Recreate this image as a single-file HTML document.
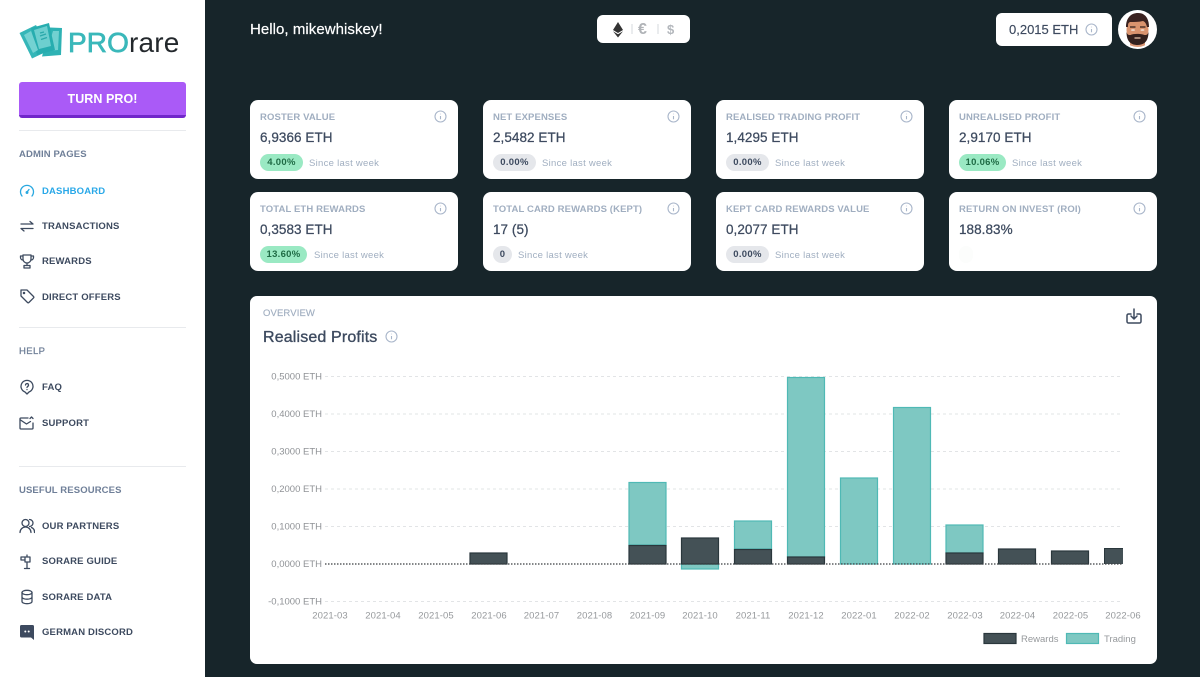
<!DOCTYPE html>
<html lang="en"><head><meta charset="utf-8"><title>PROrare</title>
<style>
*{box-sizing:border-box}
html,body{margin:0;padding:0}
body{width:1200px;height:677px;overflow:hidden;position:relative;background:#17252a;font-family:"Liberation Sans",sans-serif;color:#3d4a5f}
.abs{position:absolute;white-space:nowrap}
#side{position:absolute;left:0;top:0;width:205px;height:677px;background:#fff}
.btn{position:absolute;left:19px;top:82px;width:167px;height:36px;background:#a855f7;border-bottom:3px solid #6d21c9;border-radius:3px;color:#fff;text-align:center;font-weight:bold;font-size:12.5px;line-height:35px;letter-spacing:.05px;opacity:.97}
.hr{position:absolute;left:19px;width:167px;height:1px;background:#e8eaed}
.sec{position:absolute;left:19px;font-size:9.5px;font-weight:bold;color:#6f7f98;letter-spacing:.12px;line-height:12px;white-space:nowrap}
.nav{position:absolute;left:42px;font-size:9.5px;font-weight:bold;color:#3d4a5f;letter-spacing:.17px;line-height:12px;white-space:nowrap}
.ic{position:absolute;left:19px;width:16px;height:16px;fill:none;stroke:#3d4a5f;stroke-width:1.3;stroke-linecap:round;stroke-linejoin:round}
.card{position:absolute;width:208px;height:79px;background:#fff;border-radius:8px}
.card .t{position:absolute;left:10px;top:11px;font-size:9.5px;font-weight:bold;color:#a0aec0;letter-spacing:.12px;line-height:13px;white-space:nowrap}
.card .v{position:absolute;left:10px;top:29px;font-size:13.5px;color:#3d4a5f;letter-spacing:.05px;line-height:17px;white-space:nowrap;-webkit-text-stroke:.25px #3d4a5f}
.card .p{position:absolute;left:10px;top:54px;height:17px;border-radius:9px;font-size:9.5px;font-weight:bold;line-height:18px;text-align:center;letter-spacing:.3px}
.g{background:#9ae9c3;color:#1f6b45}.n{background:#e5e7eb;color:#3d4a5f}
.card .s{position:absolute;top:57px;font-size:9.5px;color:#a0aec0;letter-spacing:.28px;line-height:13px;white-space:nowrap}
.i{position:absolute;width:13px;height:13px;fill:none;stroke:#a9b6ca;stroke-width:1.1}
.pill{position:absolute;background:#fff;border-radius:6px}
</style></head><body>

<div id="side">
<svg class="abs" style="left:0;top:0" width="66" height="66" viewBox="0 0 66 66">
<polygon points="19.500,33 36,25 50,50 32,58.500" fill="#35b6b8"/>
<polygon points="50,27.500 62,28 61,55 42,56.500" fill="#2eb2b4"/>
<polygon points="53,31 59,31 58,50 47,51" fill="#72d1d1"/>
<polygon points="31,28 49,23 55,50 37,55" fill="#27adaf"/>
<polygon points="34,30 47,26 51,46 39,49" fill="#6dcfcf"/>
<polygon points="24,35 31,31 38,50 33,53" fill="#74d2d2"/>
<path d="M40 36l6-2M41 39.500l6-2M40 33l4-1" stroke="#2aa9ab" stroke-width="1.300" fill="none"/>
</svg>
<div class="abs" style="left:68px;top:27px;font-size:28px;line-height:31px;letter-spacing:.1px;color:#3ab8ba;font-weight:normal;-webkit-text-stroke:.7px #3ab8ba">PRO<span style="color:#23282c;letter-spacing:.2px;-webkit-text-stroke:0">rare</span></div>
<div class="btn">TURN PRO!</div>
<div class="hr" style="top:130px"></div>
<div class="sec" style="top:149px">ADMIN PAGES</div>

<svg class="ic" style="top:183px;stroke:#29a8e0" viewBox="0 0 16 16"><path d="M3 13A6.500 6.500 0 1 1 13 13"/><path d="M8 9l2-2.500"/><circle cx="8" cy="9.500" r=".8"/></svg>
<div class="nav" style="top:186px;color:#29a8e8">DASHBOARD</div>
<svg class="ic" style="top:218px" viewBox="0 0 16 16"><path d="M2 6h12l-3-2.500M14 10.500H2l3 2.500"/></svg>
<div class="nav" style="top:221px">TRANSACTIONS</div>
<svg class="ic" style="top:253px" viewBox="0 0 16 16"><path d="M4 2h8v4a4 4 0 0 1-8 0zM4 3H1.500v1.500A2.500 2.500 0 0 0 4 7M12 3h2.500v1.500A2.500 2.500 0 0 1 12 7M8 10v2M5 12.500h6V15H5z"/></svg>
<div class="nav" style="top:256px">REWARDS</div>
<svg class="ic" style="top:288px" viewBox="0 0 16 16"><path d="M2 2h6l6.500 6.500a1 1 0 0 1 0 1.400l-4.600 4.600a1 1 0 0 1-1.400 0L2 8z"/><circle cx="5" cy="5" r=".6"/></svg>
<div class="nav" style="top:292px">DIRECT OFFERS</div>

<div class="hr" style="top:327px"></div>
<div class="sec" style="top:346px;font-weight:normal;-webkit-text-stroke:.25px #6f7f98;letter-spacing:.4px">HELP</div>
<svg class="ic" style="top:379px" viewBox="0 0 16 16"><path d="M8 15l-2-2A6 6 0 1 1 10 13z"/><path d="M6.500 6a1.500 1.500 0 1 1 2 1.500L8 8.500M8 10.500v.1"/></svg>
<div class="nav" style="top:382px">FAQ</div>
<svg class="ic" style="top:415px" viewBox="0 0 16 16"><path d="M9 3H2a1 1 0 0 0-1 1v9a1 1 0 0 0 1 1h11a1 1 0 0 0 1-1V8"/><path d="M1.500 5l6 4 4-2.500M11 3.500l1.500-1.500 1.500 1.500"/></svg>
<div class="nav" style="top:418px">SUPPORT</div>

<div class="hr" style="top:466px"></div>
<div class="sec" style="top:485px">USEFUL RESOURCES</div>
<svg class="ic" style="top:518px" viewBox="0 0 16 16"><circle cx="6.500" cy="5" r="3.500"/><path d="M1 14.500a5.500 5.500 0 0 1 11 0M10.500 1.500a3.500 3.500 0 0 1 0 7M12.500 9.500a5 5 0 0 1 3 5"/></svg>
<div class="nav" style="top:521px">OUR PARTNERS</div>
<svg class="ic" style="top:554px" viewBox="0 0 16 16"><path d="M8 1v2M8 8v6.500M5.500 14.500h5M2 3h7l2 0v5H6V3M2 3v3h4"/></svg>
<div class="nav" style="top:556px">SORARE GUIDE</div>
<svg class="ic" style="top:589px" viewBox="0 0 16 16"><ellipse cx="8" cy="3.500" rx="5" ry="2.200"/><path d="M3 3.500v9c0 1.200 2.200 2.200 5 2.200s5-1 5-2.200v-9M3 8c0 1.200 2.200 2.200 5 2.200S13 9.200 13 8"/></svg>
<div class="nav" style="top:592px">SORARE DATA</div>
<svg class="ic" style="top:624px;stroke:none;fill:#3d4a5f" viewBox="0 0 16 16"><path d="M2.500 1h11A1.500 1.500 0 0 1 15 2.500V16l-3-2.500H2.500A1.500 1.500 0 0 1 1 12V2.500A1.500 1.500 0 0 1 2.500 1z"/><circle cx="6.300" cy="7.500" r="1" fill="#fff"/><circle cx="9.700" cy="7.500" r="1" fill="#fff"/></svg>
<div class="nav" style="top:627px">GERMAN DISCORD</div>
</div>

<div class="abs" style="left:250px;top:21px;font-size:15px;line-height:18px;color:#fff;-webkit-text-stroke:.2px #fff;letter-spacing:.05px">Hello, mikewhiskey!</div>

<div class="pill" style="left:597px;top:15px;width:93px;height:28px"></div>
<svg class="abs" style="left:597px;top:15px" width="93" height="28" viewBox="0 0 93 28">
<path d="M21 7l-5 8 5 3 5-3z" fill="#333"/><path d="M16 16.200l5 3 5-3-5 6.300z" fill="#333"/>
<path d="M35 9v10M61 9v10" stroke="#d5d8dc" stroke-width="1"/>
</svg>
<div class="abs" style="left:638px;top:21px;font-size:16px;line-height:18px;color:#b0b3b7;font-weight:bold">€</div>
<div class="abs" style="left:667px;top:21px;font-size:13px;line-height:17px;color:#b3b7bc;font-weight:bold">$</div>

<div class="pill" style="left:996px;top:13px;width:116px;height:33px"></div>
<div class="abs" style="left:1009px;top:21px;font-size:13px;line-height:17px;color:#3d4a5f;-webkit-text-stroke:.15px #3d4a5f">0,2015 ETH</div>
<svg class="i" style="left:1085px;top:23px" viewBox="0 0 13 13"><circle cx="6.500" cy="6.500" r="5.500"/><path d="M6.500 6v3.300M6.500 3.800v.5"/></svg>

<svg class="abs" style="left:1118px;top:10px" width="39" height="39" viewBox="0 0 39 39">
<circle cx="19.500" cy="19.500" r="19.500" fill="#fff"/>
<clipPath id="av"><circle cx="19.500" cy="19.500" r="17.500"/></clipPath>
<g clip-path="url(#av)">
<rect x="0" y="0" width="39" height="39" fill="#fff"/>
<rect x="12" y="30" width="15" height="9" fill="#dd9a78"/>
<ellipse cx="19.500" cy="20" rx="11" ry="13" fill="#d9936e"/>
<path d="M8 17C8 8 13 3 20 3s11 5 11 14l-2 0c-1-4-2-5-4-6-4 1-9 1-13 1-2 1-2 2-2 5z" fill="#3a2220"/>
<path d="M8.500 22c1 3 2 3 4 3 3-1.500 10-1.500 14 0 2 0 3 0 4-3 0 9-4 13-11 13S8.500 31 8.500 22z" fill="#33201d"/>
<path d="M12 17h5.500M22 17h5.500" stroke="#33201d" stroke-width="1.200"/>
<ellipse cx="15" cy="20" rx="2" ry=".8" fill="#f3e4da"/><ellipse cx="24.500" cy="20" rx="2" ry=".8" fill="#f3e4da"/>
<path d="M16.500 28h6" stroke="#e8c4ac" stroke-width="1.200"/>
</g></svg>

<div class="card" style="left:250px;top:100px"><div class="t">ROSTER VALUE</div><div class="v">6,9366 ETH</div><div class="p g" style="width:43px">4.00%</div><div class="s" style="left:59px">Since last week</div></div>
<div class="card" style="left:483px;top:100px"><div class="t">NET EXPENSES</div><div class="v">2,5482 ETH</div><div class="p n" style="width:43px">0.00%</div><div class="s" style="left:59px">Since last week</div></div>
<div class="card" style="left:716px;top:100px"><div class="t">REALISED TRADING PROFIT</div><div class="v">1,4295 ETH</div><div class="p n" style="width:43px">0.00%</div><div class="s" style="left:59px">Since last week</div></div>
<div class="card" style="left:949px;top:100px"><div class="t">UNREALISED PROFIT</div><div class="v">2,9170 ETH</div><div class="p g" style="width:47px">10.06%</div><div class="s" style="left:63px">Since last week</div></div>
<div class="card" style="left:250px;top:192px"><div class="t">TOTAL ETH REWARDS</div><div class="v">0,3583 ETH</div><div class="p g" style="width:47px">13.60%</div><div class="s" style="left:64px">Since last week</div></div>
<div class="card" style="left:483px;top:192px"><div class="t">TOTAL CARD REWARDS (KEPT)</div><div class="v">17 (5)</div><div class="p n" style="width:19px">0</div><div class="s" style="left:35px">Since last week</div></div>
<div class="card" style="left:716px;top:192px"><div class="t">KEPT CARD REWARDS VALUE</div><div class="v">0,2077 ETH</div><div class="p n" style="width:43px">0.00%</div><div class="s" style="left:59px">Since last week</div></div>
<div class="card" style="left:949px;top:192px"><div class="t">RETURN ON INVEST (ROI)</div><div class="v">188.83%</div><div class="p" style="width:14px;background:#fcfdfc"></div></div>

<svg class="i" style="left:434px;top:110px" viewBox="0 0 13 13"><circle cx="6.500" cy="6.500" r="5.500"/><path d="M6.500 6v3.300M6.500 3.800v.5"/></svg>
<svg class="i" style="left:667px;top:110px" viewBox="0 0 13 13"><circle cx="6.500" cy="6.500" r="5.500"/><path d="M6.500 6v3.300M6.500 3.800v.5"/></svg>
<svg class="i" style="left:900px;top:110px" viewBox="0 0 13 13"><circle cx="6.500" cy="6.500" r="5.500"/><path d="M6.500 6v3.300M6.500 3.800v.5"/></svg>
<svg class="i" style="left:1133px;top:110px" viewBox="0 0 13 13"><circle cx="6.500" cy="6.500" r="5.500"/><path d="M6.500 6v3.300M6.500 3.800v.5"/></svg>
<svg class="i" style="left:434px;top:202px" viewBox="0 0 13 13"><circle cx="6.500" cy="6.500" r="5.500"/><path d="M6.500 6v3.300M6.500 3.800v.5"/></svg>
<svg class="i" style="left:667px;top:202px" viewBox="0 0 13 13"><circle cx="6.500" cy="6.500" r="5.500"/><path d="M6.500 6v3.300M6.500 3.800v.5"/></svg>
<svg class="i" style="left:900px;top:202px" viewBox="0 0 13 13"><circle cx="6.500" cy="6.500" r="5.500"/><path d="M6.500 6v3.300M6.500 3.800v.5"/></svg>
<svg class="i" style="left:1133px;top:202px" viewBox="0 0 13 13"><circle cx="6.500" cy="6.500" r="5.500"/><path d="M6.500 6v3.300M6.500 3.800v.5"/></svg>

<div class="pill" style="left:250px;top:296px;width:907px;height:368px;border-radius:7px"></div>
<div class="abs" style="left:263px;top:308px;font-size:9.5px;line-height:12px;color:#a0aec0;letter-spacing:.12px;-webkit-text-stroke:.15px #a0aec0">OVERVIEW</div>
<div class="abs" style="left:263px;top:328px;font-size:16px;line-height:19px;color:#3d4a5f;letter-spacing:.15px;-webkit-text-stroke:.35px #3d4a5f">Realised Profits</div>
<svg class="i" style="left:385px;top:330px" viewBox="0 0 13 13"><circle cx="6.500" cy="6.500" r="5.500"/><path d="M6.500 6v3.300M6.500 3.800v.5"/></svg>
<svg class="abs" style="left:1126px;top:308px" width="16" height="17" viewBox="0 0 16 17" fill="none" stroke="#3d4a5f" stroke-width="1.500" stroke-linecap="round" stroke-linejoin="round"><path d="M5 6H2.500A1.500 1.500 0 0 0 1 7.500v6A1.500 1.500 0 0 0 2.500 15h11a1.500 1.500 0 0 0 1.500-1.500v-6A1.500 1.500 0 0 0 13.500 6H11M8 1v9.500M5 8l3 3 3-3"/></svg>

<svg class="abs" style="left:250px;top:360px;font-family:'Liberation Sans',sans-serif" width="907" height="300" viewBox="250 360 907 300">
<g stroke="#e2e4e6" stroke-width="1" stroke-dasharray="3 3">
<path d="M325 376.500H1123M325 414H1123M325 451.500H1123M325 489H1123M325 526.500H1123M325 601.500H1123"/>
</g>
<g font-size="9.5" fill="#8f9296" text-anchor="end">
<text x="322" y="379.500">0,5000 ETH</text><text x="322" y="417">0,4000 ETH</text><text x="322" y="454.500">0,3000 ETH</text><text x="322" y="492">0,2000 ETH</text><text x="322" y="529.500">0,1000 ETH</text><text x="322" y="567">0,0000 ETH</text><text x="322" y="604.500">-0,1000 ETH</text>
</g>
<g fill="#7ec8c2" stroke="#4fb9b5" stroke-width="1.200">
<rect x="629" y="482.500" width="37" height="62.500"/>
<rect x="681.500" y="564" width="37" height="5"/>
<rect x="734.500" y="521" width="37" height="28"/>
<rect x="787.500" y="377.500" width="37" height="179.500"/>
<rect x="840.500" y="478" width="37" height="86"/>
<rect x="893.500" y="407.500" width="37" height="156.500"/>
<rect x="946" y="525" width="37" height="28"/>
</g>
<g fill="#445156" stroke="#2a373c" stroke-width="1.200">
<rect x="470" y="553" width="37" height="11"/>
<rect x="629" y="545.500" width="37" height="18.500"/>
<rect x="681.500" y="538" width="37" height="26"/>
<rect x="734.500" y="549.500" width="37" height="14.500"/>
<rect x="787.500" y="557" width="37" height="7"/>
<rect x="946" y="553" width="37" height="11"/>
<rect x="998.500" y="549" width="37" height="15"/>
<rect x="1051.500" y="551" width="37" height="13"/>
</g>
<rect x="1104" y="548" width="19" height="16" fill="#445156"/>
<path d="M1104 548.500H1123M1104.500 548V564" stroke="#2a373c" stroke-width="1"/>
<path d="M325 564H1123" stroke="#3a3f42" stroke-width="1.200" stroke-dasharray="1.500 1.500"/>
<g font-size="9.500" fill="#96999c" text-anchor="middle" letter-spacing=".1">
<text x="330" y="618.500">2021-03</text><text x="383" y="618.500">2021-04</text><text x="436" y="618.500">2021-05</text><text x="489" y="618.500">2021-06</text><text x="541.500" y="618.500">2021-07</text><text x="594.500" y="618.500">2021-08</text><text x="647.500" y="618.500">2021-09</text><text x="700" y="618.500">2021-10</text><text x="753" y="618.500">2021-11</text><text x="806" y="618.500">2021-12</text><text x="859" y="618.500">2022-01</text><text x="912" y="618.500">2022-02</text><text x="965" y="618.500">2022-03</text><text x="1017.500" y="618.500">2022-04</text><text x="1070.500" y="618.500">2022-05</text><text x="1123" y="618.500">2022-06</text>
</g>
<rect x="984" y="633.500" width="32" height="10" fill="#445156" stroke="#2a373c" stroke-width="1.200"/>
<rect x="1066.500" y="633.500" width="32" height="10" fill="#7ec8c2" stroke="#4fb9b5" stroke-width="1.200"/>
<g font-size="9.500" fill="#96999c"><text x="1021" y="642">Rewards</text><text x="1104" y="642">Trading</text></g>
</svg>
</body></html>
